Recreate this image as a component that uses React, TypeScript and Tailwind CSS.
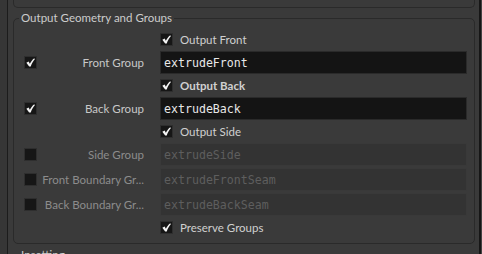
import type { ReactNode } from 'react';

function Tick() {
  return (
    <svg viewBox="0 0 13 13" className="h-[11px] w-[11px]">
      <path d="M1.6 6.9 L4.3 5.4 L5.7 8.1 C7.1 5.3 8.8 3.1 11 1.5 L11.6 2.6 C9.6 4.7 8 7.5 6.8 11.3 L4.9 11.3 Z" fill="#f4f4f4" />
    </svg>
  );
}

function Check({ on }: { on: boolean }) {
  return (
    <span className="grid h-[13px] w-[13px] shrink-0 place-items-center border border-[#2e2e2e] bg-[#161616]">
      {on && <Tick />}
    </span>
  );
}

function Toggle({ label, bold }: { label: string; bold?: boolean }) {
  return (
    <div className="flex h-[23px] items-center pl-[146px]">
      <Check on />
      <span className={'ml-[7px] text-[#d0d0d0] ' + (bold ? 'font-bold' : '')}>{label}</span>
    </div>
  );
}

function Field({ label, value, on, disabled, className = '' }: { label: string; value: string; on: boolean; disabled?: boolean; className?: string }) {
  return (
    <div className={'flex h-[23px] items-center pl-[10px] ' + className}>
      <Check on={on} />
      <span className={'w-[107px] whitespace-nowrap text-right ' + (disabled ? 'text-[#8c8c8c]' : 'text-[#c8c8c8]')}>{label}</span>
      <Input value={value} disabled={disabled} />
    </div>
  );
}

function Input({ value, disabled }: { value: string; disabled?: boolean }): ReactNode {
  return (
    <div
      className={
        "ml-[16px] flex h-[23px] w-[307px] items-center border px-[3px] font-['DejaVu_Sans_Mono',monospace] text-[11.6px] " +
        (disabled ? 'border-[#393939] bg-[#333333] text-[#5e5e5e]' : 'border-[#2a2a2a] bg-[#141414] text-[#e8e8e8]')
      }
    >
      {value}
    </div>
  );
}

export default function App() {
  return (
    <div className="flex h-[254px] w-[482px] overflow-hidden bg-[#3a3a3a] font-['Lato',sans-serif] text-[11.5px] leading-[16px]">
      <div className="w-[7px] bg-[#363636]" />
      <div className="w-px bg-[#1c1c1c]" />
      <div className="flex-1 pl-[5px] pr-[4px]">
        <div className="h-[8px] rounded-b-[5px] border-x border-b border-[#2a2a2a]" />
        <fieldset className="mt-[2px] rounded-[5px] border border-[#2a2a2a] pt-[2px] pb-[4px]">
          <legend className="ml-[5px] px-[2px] text-[#cccccc]">Output Geometry and Groups</legend>
          <Toggle label="Output Front" />
          <Field label="Front Group" value="extrudeFront" on />
          <Toggle label="Output Back" bold />
          <Field label="Back Group" value="extrudeBack" on />
          <Toggle label="Output Side" />
          <Field label="Side Group" value="extrudeSide" on={false} disabled />
          <Field label="Front Boundary Gr..." value="extrudeFrontSeam" on={false} disabled className="mt-[2px]" />
          <Field label="Back Boundary Gr..." value="extrudeBackSeam" on={false} disabled className="mt-[2px]" />
          <Toggle label="Preserve Groups" />
        </fieldset>
        <div className="mt-[3px] pl-[8px] text-[#cccccc]">Insetting</div>
      </div>
      <div className="w-[2px] bg-[#161616]" />
      <div className="w-px bg-[#444444]" />
    </div>
  );
}
